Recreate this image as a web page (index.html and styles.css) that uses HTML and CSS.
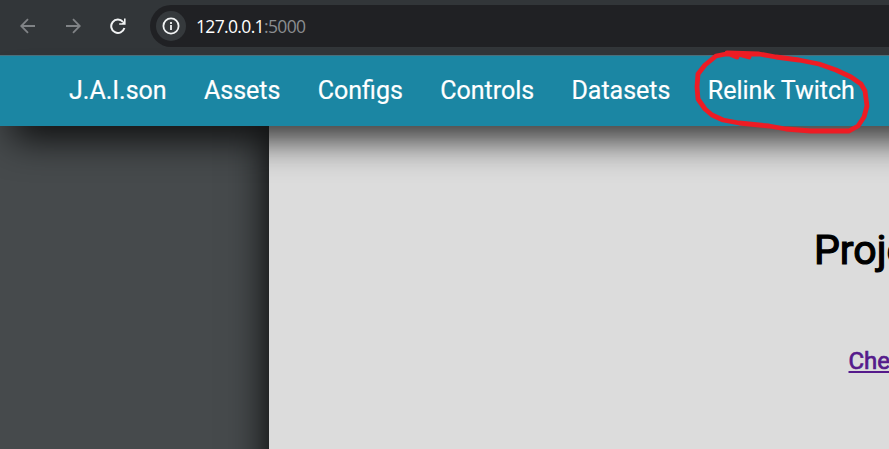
FILE: index.html
```html
<!DOCTYPE html>
<html lang="en">
<head>
<meta charset="utf-8">
<title>J.A.I.son</title>
<link rel="stylesheet" href="styles.css">
</head>
<body>
<header class="browser">
  <svg class="tool dim" viewBox="0 0 16 16"><path d="M15 8H1.5M8 1.2L1.2 8L8 14.8"/></svg>
  <svg class="tool dim" viewBox="0 0 16 16"><path d="M1 8h13.5M8 1.2L14.8 8L8 14.8"/></svg>
  <svg class="tool" viewBox="0 0 16 16"><path d="M13 3.8A6.7 6.7 0 1 0 14.4 10"/><path class="head" d="M15.6.4V6.8H9.2V5.2H12L14 3V.4Z"/></svg>
  <div class="address">
    <span class="info"><svg viewBox="0 0 18 18"><circle cx="9" cy="9" r="7.6"/><path d="M9 8v5M9 5v2"/></svg></span>
    <span class="url">127.0.0.1<span class="port">:5000</span></span>
  </div>
</header>
<nav class="nav">
  <a>J.A.I.son</a>
  <a>Assets</a>
  <a>Configs</a>
  <a>Controls</a>
  <a>Datasets</a>
  <a class="marked">Relink Twitch
    <svg class="scribble" viewBox="690 45 190 95"><path d="M750 57L739 54L727 54L717 56L706 65L699 74L698 87L699 99L706 109L713 115L724 120L740 123L770 126L787 129L812 131L850 131L859 126L865 117L868 106L866 91L862 84L852 77L837 70L820 64L800 60L777 57L760 54L728 53L738 57"/></svg>
  </a>
</nav>
<div class="page">
  <main class="content">
    <h1>Project J.A.I.son</h1>
    <a class="link">Check out the project</a>
  </main>
</div>
</body>
</html>
```
FILE: styles.css
```css
* { box-sizing: border-box; }
body {
  margin: 0;
  height: 449px;
  overflow: hidden;
  display: flex;
  flex-direction: column;
  font-family: Roboto, sans-serif;
  background: #464a4c;
}
.browser {
  height: 55px;
  flex: none;
  display: flex;
  align-items: flex-start;
  padding: 5px 0 0 20px;
  background: #323639;
}
.tool {
  width: 16px;
  height: 16px;
  margin: 13px 29px 0 0;
  fill: none;
  stroke: #f1f3f4;
  stroke-width: 2;
}
.tool .head { fill: #f1f3f4; stroke: none; }
.tool.dim { stroke: #808386; stroke-width: 1.8; }
.tool:nth-child(3) { margin-right: 24px; }
.address {
  flex: 1;
  height: 42px;
  display: flex;
  align-items: center;
  padding-left: 6px;
  border-radius: 21px 0 0 21px;
  background: #202124;
}
.info {
  width: 30px;
  height: 30px;
  display: grid;
  place-items: center;
  border-radius: 50%;
  background: #35393c;
}
.info svg {
  width: 18px;
  height: 18px;
  fill: none;
  stroke: #f1f3f4;
  stroke-width: 1.8;
}
.url {
  margin-left: 10px;
  font: 17.5px "Open Sans", sans-serif;
  letter-spacing: -0.65px;
  color: #fff;
}
.port { color: #8b8d90; }
.nav {
  position: relative;
  z-index: 1;
  width: 1920px;
  height: 71px;
  flex: none;
  display: flex;
  align-items: center;
  gap: 37.3px;
  padding-left: 69px;
  white-space: nowrap;
  font-size: 25px;
  color: #fff;
  -webkit-text-stroke: 0.2px #fff;
  background: #1b86a3;
  border-top: 1px solid #4a6f7c;
  box-shadow: 0 25px 37.5px -12.5px rgba(0, 0, 0, 0.84);
}
.nav a { margin-top: -1px; }
.marked { position: relative; }
.scribble {
  position: absolute;
  left: -19px;
  top: -31px;
  width: 190px;
  height: 95px;
  fill: none;
  stroke: #ed1c24;
  stroke-width: 4.8;
  stroke-linejoin: round;
  stroke-linecap: round;
}
.page {
  flex: 1;
  padding-left: 269px;
}
.content {
  width: 1420px;
  height: 500px;
  padding-top: 100px;
  background: #dcdcdc;
  box-shadow: 0 0 38px #000;
}
h1 {
  margin: 0 0 0 545px;
  font-size: 41px;
  line-height: 48px;
  font-weight: 400;
  -webkit-text-stroke: 1.2px #000;
}
.link {
  display: block;
  margin: 73px 0 0 579.5px;
  font-size: 24px;
  line-height: 28px;
  color: #551a8b;
  text-decoration: underline;
  -webkit-text-stroke: 0.7px #551a8b;
}
```
